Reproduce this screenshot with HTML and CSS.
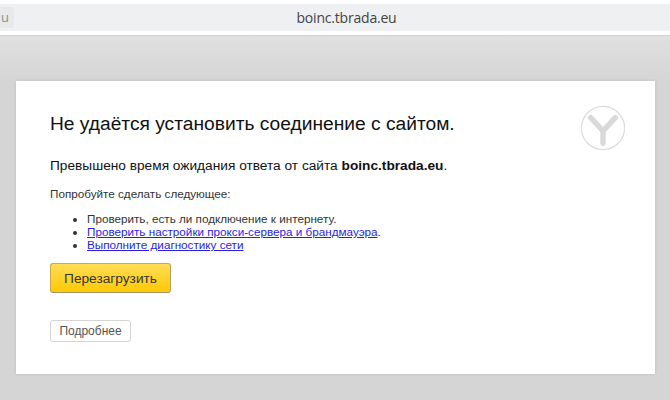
FILE: index.html
```html
<!DOCTYPE html>
<html lang="ru">
<head>
<meta charset="utf-8">
<title>boinc.tbrada.eu</title>
<link rel="stylesheet" href="styles.css">
</head>
<body>
<header class="topbar">
  <div class="addr">
    <span class="tab">u</span>
    <span class="host">boinc.tbrada.eu</span>
  </div>
</header>
<main class="backdrop">
  <section class="card">
    <svg class="logo" viewBox="0 0 46 46" width="46" height="46" aria-hidden="true">
      <circle cx="23" cy="23" r="21.6" fill="#fff" stroke="#dcdcdc" stroke-width="1.2"/>
      <path d="M10.7 12.7L23 26L35.3 12.7M23 26V38.3" fill="none" stroke="#d9d9d9" stroke-width="5.4" stroke-linecap="round" stroke-linejoin="round"/>
    </svg>
    <h1 class="title">Не удаётся установить соединение с сайтом.</h1>
    <p class="lead">Превышено время ожидания ответа от сайта <b>boinc.tbrada.eu</b>.</p>
    <p class="hint">Попробуйте сделать следующее:</p>
    <ul class="tips">
      <li>Проверить, есть ли подключение к интернету.</li>
      <li><a href="#">Проверить настройки прокси-сервера и брандмауэра</a>.</li>
      <li><a href="#">Выполните диагностику сети</a></li>
    </ul>
    <button class="reload" type="button">Перезагрузить</button>
    <button class="more" type="button">Подробнее</button>
  </section>
</main>
</body>
</html>
```

FILE: styles.css
```css
html, body {
  margin: 0;
  padding: 0;
}
body {
  width: 670px;
  height: 400px;
  overflow: hidden;
  background: #fff;
  font-family: "Liberation Sans", Arial, sans-serif;
}
.topbar {
  height: 36px;
  padding-top: 4px;
  box-sizing: border-box;
  background: #fff;
  border-bottom: 1px solid #d2d2d2;
}
.addr {
  display: flex;
  align-items: center;
  justify-content: center;
  position: relative;
  height: 27px;
  padding-left: 23px;
  box-sizing: border-box;
  background: #eff0f2;
}
.tab {
  position: absolute;
  left: 0;
  top: 3px;
  width: 14px;
  height: 21px;
  box-sizing: border-box;
  padding-left: 1px;
  background: #e8e9eb;
  border-radius: 0 2px 2px 0;
  font: 13px/21px "Open Sans", sans-serif;
  color: #8f8f8f;
}
.host {
  font: 14px/27px "Open Sans", sans-serif;
  letter-spacing: -0.2px;
  color: #444;
}
.backdrop {
  height: 364px;
  box-sizing: border-box;
  padding: 45px 15px 0 16px;
  background: linear-gradient(#e0e0e0 0, #d5d5d5 45px);
}
.card {
  position: relative;
  height: 293px;
  box-sizing: border-box;
  padding: 30px 34px 0;
  background: #fff;
  box-shadow: 0 0 3px rgba(0, 0, 0, 0.12);
}
.logo {
  position: absolute;
  right: 29px;
  top: 24px;
}
.title {
  margin: 0;
  font-size: 19.2px;
  line-height: 25px;
  font-weight: 400;
  color: #111;
}
.lead {
  margin: 21px 0 0;
  font-size: 13.7px;
  line-height: 18px;
  color: #111;
}
.hint {
  margin: 11px 0 0;
  font-size: 11.7px;
  line-height: 15px;
  color: #333;
}
.tips {
  margin: 11px 0 0;
  padding-left: 37px;
  font-size: 11.7px;
  line-height: 13px;
  color: #333;
}
.tips a {
  color: #2a1fe0;
}
.reload {
  display: block;
  width: 121px;
  height: 30px;
  margin: 12px 0 0;
  padding: 0;
  border: 1px solid #c9a94c;
  border-bottom-color: #a8926a;
  border-right-color: #b5a06a;
  border-radius: 3px;
  background: linear-gradient(#ffdd55, #ffc905);
  font: 13.7px "Liberation Sans", Arial, sans-serif;
  color: #333;
}
.more {
  display: block;
  width: 81px;
  height: 22px;
  margin: 27px 0 0;
  padding: 0;
  border: 1px solid #d4d4d4;
  border-radius: 3px;
  background: #fff;
  font: 12px "Liberation Sans", Arial, sans-serif;
  color: #555;
}
```
